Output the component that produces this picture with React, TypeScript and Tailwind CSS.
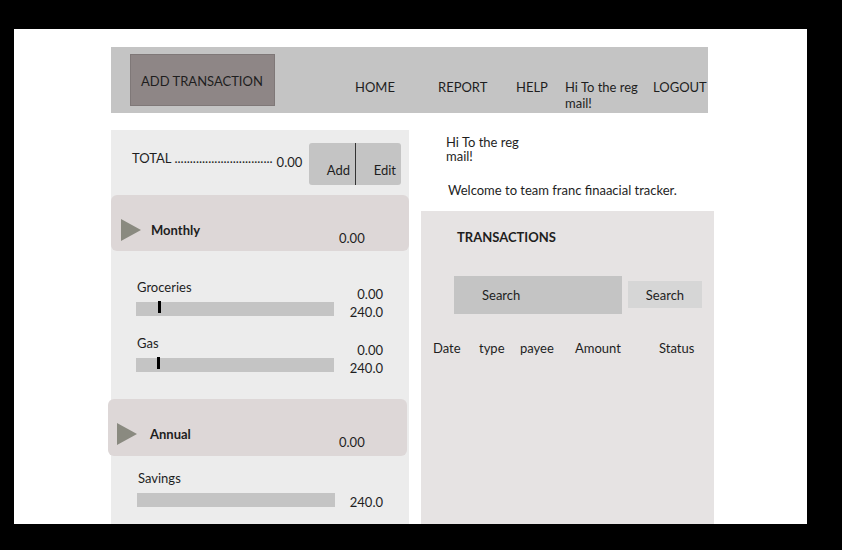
function Triangle() {
  return (
    <svg width="20" height="22" viewBox="0 0 20 22" className="shrink-0">
      <polygon points="0,0 20,11 0,22" fill="#8a8a80" />
    </svg>
  );
}

function BudgetRow({ label, marker, spent }: { label: string; marker: number; spent: string }) {
  return (
    <div className="flex h-[37px] pl-[25px]">
      <div className="w-[198px] shrink-0">
        <p className="pl-[1px] text-[13px] leading-[16px]">{label}</p>
        <div className="relative mt-[7px] h-[14px] bg-[#c4c4c4]">
          <div className="absolute top-[-1px] h-[12px] w-[3px] bg-black" style={{ left: marker }} />
        </div>
      </div>
      <div className="mt-[6px] w-[49px] shrink-0 text-right text-[13px] leading-[18px]">
        <p>{spent}</p>
        <p>240.0</p>
      </div>
    </div>
  );
}

export default function App() {
  const columns = [
    { name: "Date", w: "w-[46px]" },
    { name: "type", w: "w-[41px]" },
    { name: "payee", w: "w-[55px]" },
    { name: "Amount", w: "w-[84px]" },
    { name: "Status", w: "w-[50px]" },
  ];

  return (
    <div className="h-[550px] w-[842px] bg-black pl-[14px] pt-[29px] font-['Lato',sans-serif] text-[#1e1e1e]">
      <div className="h-[495px] w-[793px] overflow-hidden bg-white pl-[97px] pt-[18px]">
        {/* top bar */}
        <div className="flex h-[66px] w-[597px] items-start bg-[#c4c4c4] text-[13px] leading-[16px]">
          <div className="ml-[19px] mt-[7px] h-[52px] w-[145px] shrink-0 whitespace-nowrap border border-[#7f7878] bg-[#8e8686] pl-[10px] pt-[18px]">
            ADD TRANSACTION
          </div>
          <div className="ml-[80px] mt-[32px] flex shrink-0">
            <span className="w-[83px] shrink-0">HOME</span>
            <span className="w-[78px] shrink-0">REPORT</span>
            <span className="w-[49px] shrink-0">HELP</span>
            <span className="w-[88px] shrink-0 pr-[8px]">Hi To the reg mail!</span>
            <span className="shrink-0">LOGOUT</span>
          </div>
        </div>

        <div className="mt-[17px] flex">
          {/* budgets */}
          <div className="h-[394px] w-[298px] shrink-0 bg-[#ececec]">
            <div className="flex h-[65px] items-start pt-[13px]">
              <div className="flex items-start whitespace-nowrap pl-[21px] pt-[7px] text-[13px] leading-[16px]">
                <span>TOTAL ................................</span>
                <span className="ml-[4px] mt-[4px]">0.00</span>
              </div>
              <div className="ml-auto mr-[8px] flex h-[42px] w-[92px] shrink-0 rounded-[3px] bg-[#c4c4c4] text-[13px] leading-[16px]">
                <button className="flex w-[46px] items-end justify-end pb-[7px] pr-[5px]">Add</button>
                <div className="w-px bg-[#333]" />
                <button className="flex flex-1 items-end justify-end pb-[7px] pr-[5px]">Edit</button>
              </div>
            </div>

            <div className="flex h-[56px] items-start rounded-[6px] bg-[#ddd7d7]">
              <div className="ml-[10px] mt-[24px]"><Triangle /></div>
              <span className="ml-[10px] mt-[27px] w-[188px] text-[13px] font-bold leading-[16px]">Monthly</span>
              <span className="mt-[35px] text-[13px] leading-[16px]">0.00</span>
            </div>

            <div className="mt-[28px]">
              <BudgetRow label="Groceries" marker={22} spent="0.00" />
            </div>
            <div className="mt-[19px]">
              <BudgetRow label="Gas" marker={21} spent="0.00" />
            </div>

            <div className="-ml-[3px] mt-[27px] flex h-[57px] w-[299px] items-start rounded-[6px] bg-[#ddd7d7]">
              <div className="ml-[9px] mt-[24px]"><Triangle /></div>
              <span className="ml-[13px] mt-[27px] w-[189px] text-[13px] font-bold leading-[16px]">Annual</span>
              <span className="mt-[35px] text-[13px] leading-[16px]">0.00</span>
            </div>

            <div className="mt-[14px] flex pl-[26px] text-[13px] leading-[16px]">
              <div className="w-[198px] shrink-0">
                <p className="pl-[1px]">Savings</p>
                <div className="mt-[7px] h-[14px] bg-[#c4c4c4]" />
              </div>
              <p className="mt-[24px] w-[48px] text-right">240.0</p>
            </div>
          </div>

          {/* transactions */}
          <div className="ml-[12px] w-[293px] shrink-0 text-[13px]">
            <p className="ml-[25px] mt-[5px] w-[80px] leading-[14px]">Hi To the reg mail!</p>
            <p className="ml-[27px] mt-[19px] leading-[16px]">Welcome to team franc finaacial tracker.</p>
            <div className="mt-[13px] h-[313px] bg-[#e6e3e3] pt-[18px] leading-[16px]">
              <h2 className="pl-[36px] font-bold">TRANSACTIONS</h2>
              <div className="ml-[33px] mt-[31px] flex items-start">
                <div className="flex h-[38px] w-[168px] items-center bg-[#c4c4c4] pl-[28px]">Search</div>
                <button className="ml-[6px] mt-[5px] flex h-[27px] w-[74px] items-center justify-center bg-[#d6d6d6]">
                  Search
                </button>
              </div>
              <div className="ml-[12px] mt-[26px] flex">
                {columns.map((c) => (
                  <span key={c.name} className={c.w}>{c.name}</span>
                ))}
              </div>
            </div>
          </div>
        </div>
      </div>
    </div>
  );
}
